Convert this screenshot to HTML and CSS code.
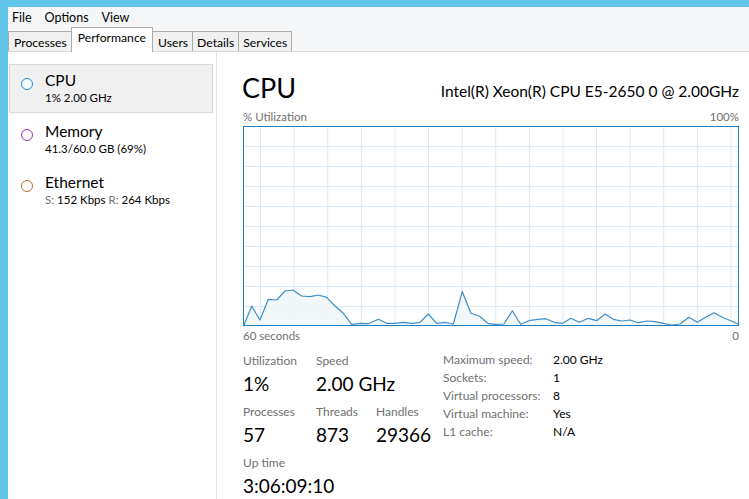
FILE: index.html
```html
<!DOCTYPE html>
<html>
<head>
<meta charset="utf-8">
<link rel="stylesheet" href="styles.css">
</head>
<body>
<div class="window">
  <div class="menubar">
    <span class="menu">File</span>
    <span class="menu">Options</span>
    <span class="menu">View</span>
  </div>
  <div class="tabs">
    <div class="tab">Processes</div>
    <div class="tab active">Performance</div>
    <div class="tab">Users</div>
    <div class="tab">Details</div>
    <div class="tab">Services</div>
  </div>
  <div class="content">
    <div class="sidebar">
      <div class="item selected">
        <span class="dot cpu"></span>
        <div class="item-text">
          <div class="item-title">CPU</div>
          <div class="item-sub">1% 2.00 GHz</div>
        </div>
      </div>
      <div class="item">
        <span class="dot mem"></span>
        <div class="item-text">
          <div class="item-title">Memory</div>
          <div class="item-sub">41.3/60.0 GB (69%)</div>
        </div>
      </div>
      <div class="item">
        <span class="dot eth"></span>
        <div class="item-text">
          <div class="item-title">Ethernet</div>
          <div class="item-sub"><span class="muted">S:</span> 152 Kbps <span class="muted">R:</span> 264 Kbps</div>
        </div>
      </div>
    </div>
    <div class="main">
      <div class="head">
        <div class="h1">CPU</div>
        <div class="model">Intel(R) Xeon(R) CPU E5-2650 0 @ 2.00GHz</div>
      </div>
      <div class="axis top"><span>% Utilization</span><span>100%</span></div>
      <svg class="graph" width="496" height="200" viewBox="0 0 496 200">
        <rect x="0" y="0" width="496" height="200" fill="#ffffff"/>
        <path d="M0 20.5H496M0 40.5H496M0 60.5H496M0 80.5H496M0 100.5H496M0 120.5H496M0 140.5H496M0 160.5H496M0 180.5H496M17.5 0V200M51.1 0V200M84.7 0V200M118.3 0V200M151.9 0V200M185.5 0V200M219.1 0V200M252.7 0V200M286.3 0V200M319.9 0V200M353.5 0V200M387.1 0V200M420.7 0V200M454.3 0V200M487.9 0V200" stroke="#d9eaf4" stroke-width="1" fill="none"/>
        <polygon fill="#f1f6fa" fill-opacity="0.9" points="1,199 8.7,180 17,194 25.3,173.3 33.7,174 42,165 49.7,164 58.7,170 67,170.7 75.3,169 83.7,171.3 92,180 100.3,187.3 108.7,198.3 117,197.3 125.3,197.7 135.3,193.3 143.7,197.3 152,197.3 160.3,196.3 168.7,197.3 177,196.3 185.3,188 193.7,197.3 202,196.3 210.3,198 219.3,165.7 228,187.3 236.3,190 244.7,197.3 252,198.3 261,198 269.3,184.7 277.7,198.3 286,194.7 294.7,193.3 302.7,192.7 311.3,196.3 319.7,197.3 328,192.3 336.3,196.3 345.3,192.3 353.7,194.7 362,188 370.3,193.3 378.7,195 387,194 395.3,196.7 403.7,195 412,195.7 420.3,197.3 428.7,199 437,198 446,191.3 454.3,196.3 462.7,191.3 471,186.7 479.3,191.3 487.7,194.7 495.3,198 495.3,199"/>
        <polyline fill="none" stroke="#3d8fc6" stroke-width="1.2" stroke-linejoin="round" points="1,199 8.7,180 17,194 25.3,173.3 33.7,174 42,165 49.7,164 58.7,170 67,170.7 75.3,169 83.7,171.3 92,180 100.3,187.3 108.7,198.3 117,197.3 125.3,197.7 135.3,193.3 143.7,197.3 152,197.3 160.3,196.3 168.7,197.3 177,196.3 185.3,188 193.7,197.3 202,196.3 210.3,198 219.3,165.7 228,187.3 236.3,190 244.7,197.3 252,198.3 261,198 269.3,184.7 277.7,198.3 286,194.7 294.7,193.3 302.7,192.7 311.3,196.3 319.7,197.3 328,192.3 336.3,196.3 345.3,192.3 353.7,194.7 362,188 370.3,193.3 378.7,195 387,194 395.3,196.7 403.7,195 412,195.7 420.3,197.3 428.7,199 437,198 446,191.3 454.3,196.3 462.7,191.3 471,186.7 479.3,191.3 487.7,194.7 495.3,198"/>
        <rect x="0.5" y="0.5" width="495" height="199" fill="none" stroke="#1e7fbf" stroke-width="1"/>
      </svg>
      <div class="axis"><span>60 seconds</span><span>0</span></div>
      <div class="stats">
        <div class="counters">
          <div class="cell"><div class="lbl">Utilization</div><div class="val">1%</div></div>
          <div class="cell"><div class="lbl">Speed</div><div class="val">2.00 GHz</div></div>
          <div class="cell"></div>
          <div class="cell"><div class="lbl">Processes</div><div class="val">57</div></div>
          <div class="cell"><div class="lbl">Threads</div><div class="val">873</div></div>
          <div class="cell"><div class="lbl">Handles</div><div class="val">29366</div></div>
          <div class="cell"><div class="lbl">Up time</div><div class="val">3:06:09:10</div></div>
        </div>
        <div class="specs">
          <div class="spec-l">Maximum speed:</div><div class="spec-v">2.00 GHz</div>
          <div class="spec-l">Sockets:</div><div class="spec-v">1</div>
          <div class="spec-l">Virtual processors:</div><div class="spec-v">8</div>
          <div class="spec-l">Virtual machine:</div><div class="spec-v">Yes</div>
          <div class="spec-l">L1 cache:</div><div class="spec-v">N/A</div>
        </div>
      </div>
    </div>
  </div>
</div>
</body>
</html>
```

FILE: styles.css
```css
html, body {
  margin: 0;
  padding: 0;
  background: #ffffff;
}
body {
  font-family: "Lato", "Open Sans", sans-serif;
  color: #000000;
  font-size: 12px;
}
.window {
  width: 741px;
  height: 492px;
  border-top: 7px solid #62c5ea;
  border-left: 8px solid #62c5ea;
  background: #f0f0f0;
  display: flex;
  flex-direction: column;
  overflow: hidden;
}
.menubar {
  flex: none;
  height: 20px;
  display: flex;
  align-items: center;
  gap: 13px;
  padding-left: 4px;
  padding-top: 1px;
  box-sizing: border-box;
  background: #f5f6f7;
  font-size: 12.5px;
}
.tabs {
  flex: none;
  height: 24px;
  display: flex;
  align-items: flex-end;
  background: #f5f6f7;
}
.tab {
  height: 20px;
  line-height: 21px;
  padding: 0 4px;
  border: 1px solid #acacac;
  border-bottom: none;
  border-right: none;
  background: #f0f0f0;
  font-size: 12.2px;
  box-sizing: border-box;
}
.tab:first-child {
  padding-left: 5px;
}
.tab:last-child {
  border-right: 1px solid #acacac;
}
.tab.active {
  height: 25px;
  line-height: 19px;
  background: #ffffff;
  border-right: 1px solid #acacac;
  margin-bottom: -1px;
  position: relative;
  z-index: 1;
  padding: 0 6px;
}
.tab.active + .tab {
  border-left: none;
  padding-left: 5px;
}
.content {
  flex: 1;
  min-height: 0;
  display: flex;
  background: #ffffff;
  border-top: 1px solid #d9d9d9;
}
.sidebar {
  width: 208px;
  flex: none;
  border-right: 1px solid #e3e3e3;
  padding-top: 12px;
  display: flex;
  flex-direction: column;
  gap: 2px;
}
.item {
  height: 49px;
  margin-left: 1px;
  width: 204px;
  box-sizing: border-box;
  display: flex;
  align-items: flex-start;
  padding: 6px 0 0 11px;
  border: 1px solid transparent;
}
.item.selected {
  background: #f0f0f0;
  border-color: #d9d9d9;
}
.dot {
  width: 10px;
  height: 10px;
  border-radius: 50%;
  border: 1.5px solid #117dbb;
  background: #ffffff;
  margin-top: 7px;
  flex: none;
}
.dot.cpu { border-color: #2a8ad0; background: #f4f9fd; }
.dot.mem { border-color: #9e2cc0; }
.dot.eth { border-color: #c06a22; }
.item-text {
  margin-left: 12px;
}
.item-title {
  font-size: 15.5px;
  line-height: 19px;
}
.item-sub {
  font-size: 11.5px;
  line-height: 16px;
}
.muted {
  color: #707070;
}
.main {
  flex: 1;
  min-width: 0;
  padding: 0 10px 0 26px;
  display: flex;
  flex-direction: column;
}
.head {
  flex: none;
  display: flex;
  justify-content: space-between;
  align-items: flex-end;
  height: 52px;
}
.h1 {
  font-size: 27px;
  line-height: 33px;
  margin-left: -1px;
}
.model {
  font-size: 15.5px;
  line-height: 20px;
  margin-bottom: 3px;
}
.axis {
  flex: none;
  display: flex;
  justify-content: space-between;
  color: #707070;
  font-size: 11.5px;
  line-height: 16px;
  height: 16px;
  margin-top: 2px;
}
.axis.top {
  margin-top: 5px;
  margin-bottom: 1px;
}
.graph {
  display: block;
  flex: none;
}
.stats {
  display: flex;
  margin-top: 8px;
}
.counters {
  display: grid;
  grid-template-columns: 73px 60px 67px;
  row-gap: 6px;
  width: 200px;
}
.lbl {
  color: #707070;
  font-size: 12px;
  line-height: 18px;
  white-space: nowrap;
}
.val {
  font-size: 19px;
  line-height: 27px;
  white-space: nowrap;
}
.specs {
  display: grid;
  grid-template-columns: 110px auto;
  grid-auto-rows: 18px;
  align-content: start;
  font-size: 12px;
  line-height: 18px;
  margin-top: -1px;
}
.spec-l {
  color: #707070;
}
```
